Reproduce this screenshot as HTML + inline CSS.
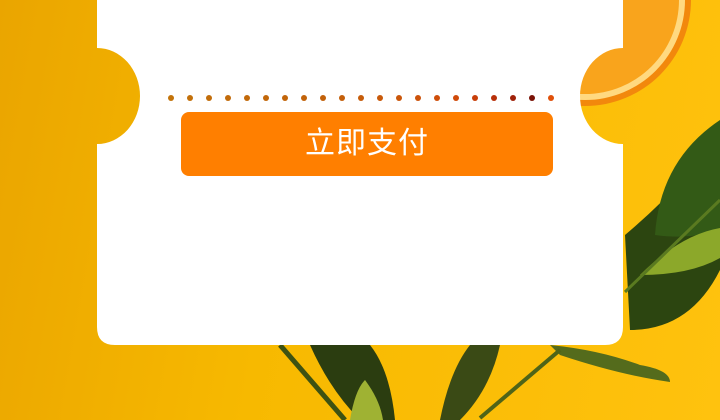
<!DOCTYPE html>
<html><head><meta charset="utf-8"><style>
html,body{margin:0;padding:0}
body{width:720px;height:420px;overflow:hidden;position:relative;background:linear-gradient(100deg,#eaa500 0%,#f7b900 40%,#ffc20e 100%);font-family:"Liberation Sans","Noto Sans CJK SC",sans-serif}
svg.bg{position:absolute;left:0;top:0}
.dots{position:absolute;top:95px;left:168px;width:390px;height:6px}
.btn{position:absolute;left:181px;top:112px;width:372px;height:64px;background:#ff7f00;border-radius:8px;color:#fff;font-size:30px;line-height:64px;text-align:center;letter-spacing:1px}
</style></head><body>
<svg class="bg" width="720" height="420">
<path d="M625 235 Q690 180 720 130 L720 270 Q690 330 630 330 Z" fill="#2c4510"/>
<path d="M655 235 Q660 160 720 120 L720 230 Q690 240 655 235Z" fill="#335a16"/>
<path d="M640 275 Q680 235 720 228 L720 258 Q690 275 640 275Z" fill="#8ca82a"/>
<path d="M310 345 Q330 390 360 420 L395 420 Q390 370 370 345Z" fill="#2b3d10"/>
<path d="M350 420 Q355 390 365 380 Q380 400 383 420Z" fill="#9fb233"/>
<path d="M440 420 Q450 370 470 345 L500 345 Q490 390 460 420Z" fill="#3a4a15"/>
<path d="M550 345 Q600 350 640 365 Q670 370 670 382 Q620 375 560 355Z" fill="#546b1c"/>
<path d="M280 345 L345 420" stroke="#3d5212" stroke-width="5"/>
<path d="M480 418 L560 350" stroke="#4f6418" stroke-width="4"/>
<path d="M625 292 L720 200" stroke="#5a7a20" stroke-width="3"/>
<circle cx="585" cy="0" r="106" fill="#f2880c"/>
<circle cx="585" cy="0" r="100" fill="#ffd980"/>
<circle cx="585" cy="0" r="94" fill="#f9a41c"/>
<path d="M97 0 H623 V48 A43 48 0 0 0 623 144 V327 Q623 345 605 345 H115 Q97 345 97 327 V144 A43 48 0 0 0 97 48 Z" fill="#fff"/>
</svg>
<svg class="dots" viewBox="0 0 390 6">
<circle cx="3" cy="3" r="3" fill="#c3730a"/><circle cx="22" cy="3" r="3" fill="#c3700a"/><circle cx="41" cy="3" r="3" fill="#c26d0a"/><circle cx="60" cy="3" r="3" fill="#c26b0a"/><circle cx="79" cy="3" r="3" fill="#c2690a"/><circle cx="98" cy="3" r="3" fill="#c2670a"/><circle cx="117" cy="3" r="3" fill="#c2650a"/><circle cx="136" cy="3" r="3" fill="#c2630a"/><circle cx="155" cy="3" r="3" fill="#c2610a"/><circle cx="174" cy="3" r="3" fill="#c45f0a"/><circle cx="193" cy="3" r="3" fill="#c65c0a"/><circle cx="212" cy="3" r="3" fill="#c8590a"/><circle cx="231" cy="3" r="3" fill="#ca560a"/><circle cx="250" cy="3" r="3" fill="#cc520a"/><circle cx="269" cy="3" r="3" fill="#cf4e0a"/><circle cx="288" cy="3" r="3" fill="#d04a0a"/><circle cx="307" cy="3" r="3" fill="#c83f0a"/><circle cx="326" cy="3" r="3" fill="#b8300a"/><circle cx="345" cy="3" r="3" fill="#a0220a"/><circle cx="364" cy="3" r="3" fill="#7a1206"/><circle cx="383" cy="3" r="3" fill="#e0500a"/>
</svg>
<div class="btn">立即支付</div>
</body></html>
